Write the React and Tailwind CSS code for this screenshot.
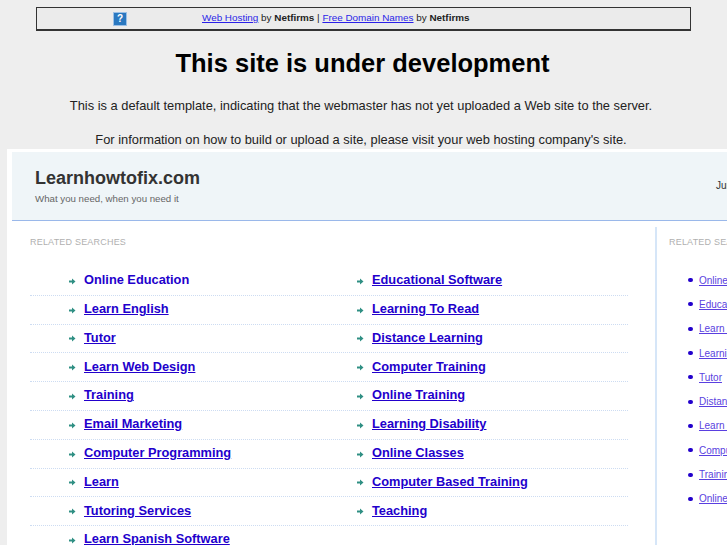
const left = ["Online Education","Learn English","Tutor","Learn Web Design","Training","Email Marketing","Computer Programming","Learn","Tutoring Services","Learn Spanish Software"];
const right = ["Educational Software","Learning To Read","Distance Learning","Computer Training","Online Training","Learning Disability","Online Classes","Computer Based Training","Teaching",""];
const side = ["Online Education","Educational Software","Learn English","Learning To Read","Tutor","Distance Learning","Learn Web Design","Computer Training","Training","Online Training"];

function Arrow() {
  return (
    <svg width="7" height="7" viewBox="0 0 7 7" className="shrink-0">
      <path d="M0 2.5h3V0.5L6.5 3.5 3 6.5V4.5H0z" fill="#2f8f83" />
    </svg>
  );
}

function Row({ text, plain }) {
  return (
    <div className="flex h-[27.8px] items-center pb-[2px] pl-[39px]">
      <span className="flex w-[15px] pt-[3px]"><Arrow /></span>
      <a className={`text-[12.8px] font-bold text-[#2200cc] ${plain ? "" : "underline"}`}>{text}</a>
    </div>
  );
}

export default function App() {
  return (
    <div className="h-[545px] w-[727px] overflow-hidden bg-[#eeeeee] font-['Liberation_Sans',Arial,sans-serif]">
      <div className="h-[149px] pt-[7px]">
        <div className="mx-[36px] flex h-[24px] w-[655px] items-center border border-b-2 border-[#333333] bg-[#ebebeb] text-[9.9px] text-[#222222]">
          <span className="ml-[76px] flex h-[14px] w-[14px] items-center justify-center border border-[#9cc0e6] bg-[#2a78c0] text-[10px] font-bold leading-none text-white">?</span>
          <span className="ml-[75px]">
            <a className="text-[#2a1fe8] underline">Web Hosting</a> by <b>Netfirms</b> | <a className="text-[#2a1fe8] underline">Free Domain Names</a> by <b>Netfirms</b>
          </span>
        </div>
        <h1 className="mt-[16px] pr-[2px] text-center text-[25.5px] font-bold leading-[32px] text-black">This site is under development</h1>
        <p className="mt-[19px] pr-[5px] text-center text-[12.87px] leading-[15px] text-[#222222]">This is a default template, indicating that the webmaster has not yet uploaded a Web site to the server.</p>
        <p className="mt-[19px] pr-[5px] text-center text-[12.87px] leading-[15px] text-[#222222]">For information on how to build or upload a site, please visit your web hosting company's site.</p>
      </div>
      <div className="ml-[7px] h-[396px] w-[900px] bg-white pl-[5px] pt-[3px]">
        <header className="flex h-[69px] items-start border-b border-[#9ab8ea] bg-[#eff5f8] pt-[15px]">
          <div className="w-[704px] pl-[23px]">
            <div className="text-[18px] font-bold leading-[22px] text-[#333333]">Learnhowtofix.com</div>
            <div className="mt-[4px] text-[9.7px] leading-[12px] text-[#666666]">What you need, when you need it</div>
          </div>
          <div className="mt-[13px] text-[10px] leading-[11px] text-[#333333]">June 2011</div>
        </header>
        <div className="flex">
          <main className="mt-[6px] w-[645px] border-r-2 border-[#d6e6f8] pl-[18px] pt-[10px]">
            <div className="text-[9px] leading-[11px] tracking-[0.2px] text-[#b0b0b0]">RELATED SEARCHES</div>
            <div className="mt-[19px] w-[598px]">
              {left.map((l, i) => (
                <div key={l} className="flex border-b border-dotted border-[#cddcf2]">
                  <div className="w-[288px]"><Row text={l} plain={i === 0} /></div>
                  <div>{right[i] && <Row text={right[i]} />}</div>
                </div>
              ))}
            </div>
          </main>
          <aside className="pl-[12px] pt-[16px]">
            <div className="text-[9px] leading-[11px] tracking-[0.2px] text-[#b0b0b0]">RELATED SEARCHES</div>
            <ul className="mt-[20px] pl-[19px]">
              {side.map((s) => (
                <li key={s} className="flex h-[24.3px] items-center">
                  <span className="h-[4px] w-[5px] rounded-full bg-[#2200cc]" />
                  <a className="ml-[6px] text-[10px] text-[#5a3fe0] underline">{s}</a>
                </li>
              ))}
            </ul>
          </aside>
        </div>
      </div>
    </div>
  );
}
